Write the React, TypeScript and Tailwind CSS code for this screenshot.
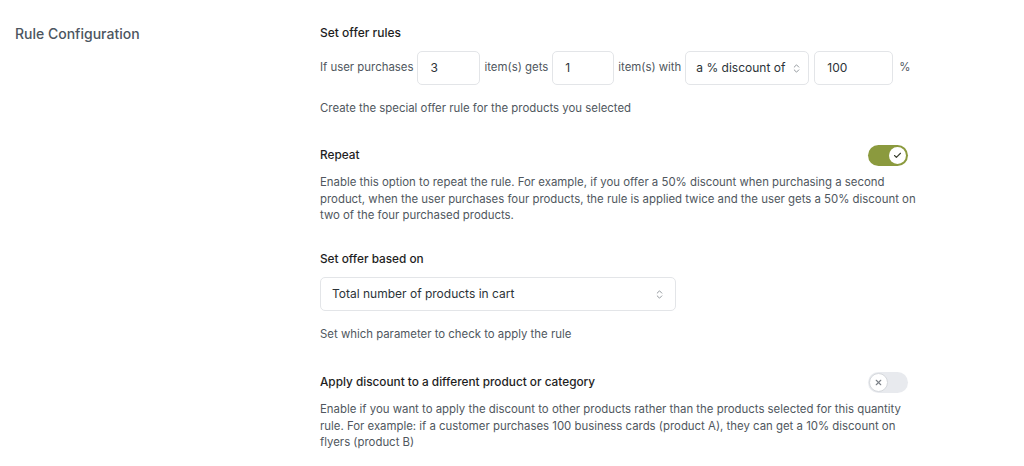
import { Check, X, ChevronsUpDown } from "lucide-react";

function Toggle({ on }: { on: boolean }) {
  return (
    <div
      className={
        on
          ? "flex h-[21px] w-[40px] items-center justify-end rounded-full bg-[#8b9a3e] px-[2px]"
          : "flex h-[21px] w-[40px] items-center justify-start rounded-full bg-[#e8eaee] px-[1px]"
      }
    >
      <span
        className={
          on
            ? "flex size-[17px] items-center justify-center rounded-full bg-white"
            : "flex size-[19px] items-center justify-center rounded-full border border-[#d5d8dc] bg-white"
        }
      >
        {on ? (
          <Check className="size-[9px] text-[#3a3f30]" strokeWidth={3} />
        ) : (
          <X className="size-[9px] text-[#7b8087]" strokeWidth={3} />
        )}
      </span>
    </div>
  );
}

function Box({ value, className }: { value: string; className: string }) {
  return (
    <div
      className={`flex h-[34px] shrink-0 items-center whitespace-nowrap rounded-[5px] border border-[#e3e5e8] bg-white px-[12px] text-[12px] text-[#2c3338] ${className}`}
    >
      {value}
    </div>
  );
}

export default function App() {
  return (
    <div
      className="flex h-[466px] w-[1024px] bg-white text-[11.4px] text-[#50575e]"
      style={{ fontFamily: "Inter, 'Noto Sans', sans-serif" }}
    >
      <div className="w-[320px] shrink-0 pl-[15px] pt-[23px]">
        <h2 className="text-[14px] font-medium text-[#4c5560]">Rule Configuration</h2>
      </div>

      <div className="w-[600px] pt-[24px]">
        {/* Set offer rules */}
        <p className="text-[12px] font-medium text-[#1e1e1e]">Set offer rules</p>
        <div className="mt-[9px] flex items-center whitespace-nowrap">
          <span>If user purchases</span>
          <Box value="3" className="ml-[4px] w-[63px]" />
          <span className="ml-[4px]">item(s) gets</span>
          <Box value="1" className="ml-[4px] w-[62px]" />
          <span className="ml-[4px]">item(s) with</span>
          <div className="ml-[4px] flex h-[34px] w-[124px] shrink-0 items-center justify-between rounded-[5px] border border-[#e3e5e8] bg-white pl-[10px] pr-[6px] text-[12px] text-[#2c3338]">
            <span>a % discount of</span>
            <ChevronsUpDown className="size-[11px] text-[#8a8f95]" />
          </div>
          <Box value="100" className="ml-[5px] w-[79px]" />
          <span className="ml-[6px]">%</span>
        </div>
        <p className="mt-[15px]">Create the special offer rule for the products you selected</p>

        {/* Repeat */}
        <div className="mt-[28px] flex w-[588px] items-center justify-between">
          <p className="text-[11.8px] font-medium text-[#1e1e1e]">Repeat</p>
          <Toggle on />
        </div>
        <p className="mt-[8px] leading-[16.5px]">
          Enable this option to repeat the rule. For example, if you offer a 50% discount when purchasing a second
          product, when the user purchases four products, the rule is applied twice and the user gets a 50% discount on
          two of the four purchased products.
        </p>

        {/* Set offer based on */}
        <p className="mt-[27px] text-[11.8px] font-medium text-[#1e1e1e]">Set offer based on</p>
        <div className="mt-[9px] flex h-[34px] w-[356px] items-center justify-between rounded-[5px] border border-[#e3e5e8] bg-white pl-[11px] pr-[10px] text-[12px] text-[#2c3338]">
          <span>Total number of products in cart</span>
          <ChevronsUpDown className="size-[11px] text-[#8a8f95]" />
        </div>
        <p className="mt-[15px]">Set which parameter to check to apply the rule</p>

        {/* Apply discount */}
        <div className="mt-[29px] flex w-[588px] items-center justify-between">
          <p className="text-[11.8px] font-medium text-[#1e1e1e]">Apply discount to a different product or category</p>
          <Toggle on={false} />
        </div>
        <p className="mt-[8px] leading-[16.5px]">
          Enable if you want to apply the discount to other products rather than the products selected for this quantity
          rule. For example: if a customer purchases 100 business cards (product A), they can get a 10% discount on
          flyers (product B)
        </p>
      </div>
    </div>
  );
}
